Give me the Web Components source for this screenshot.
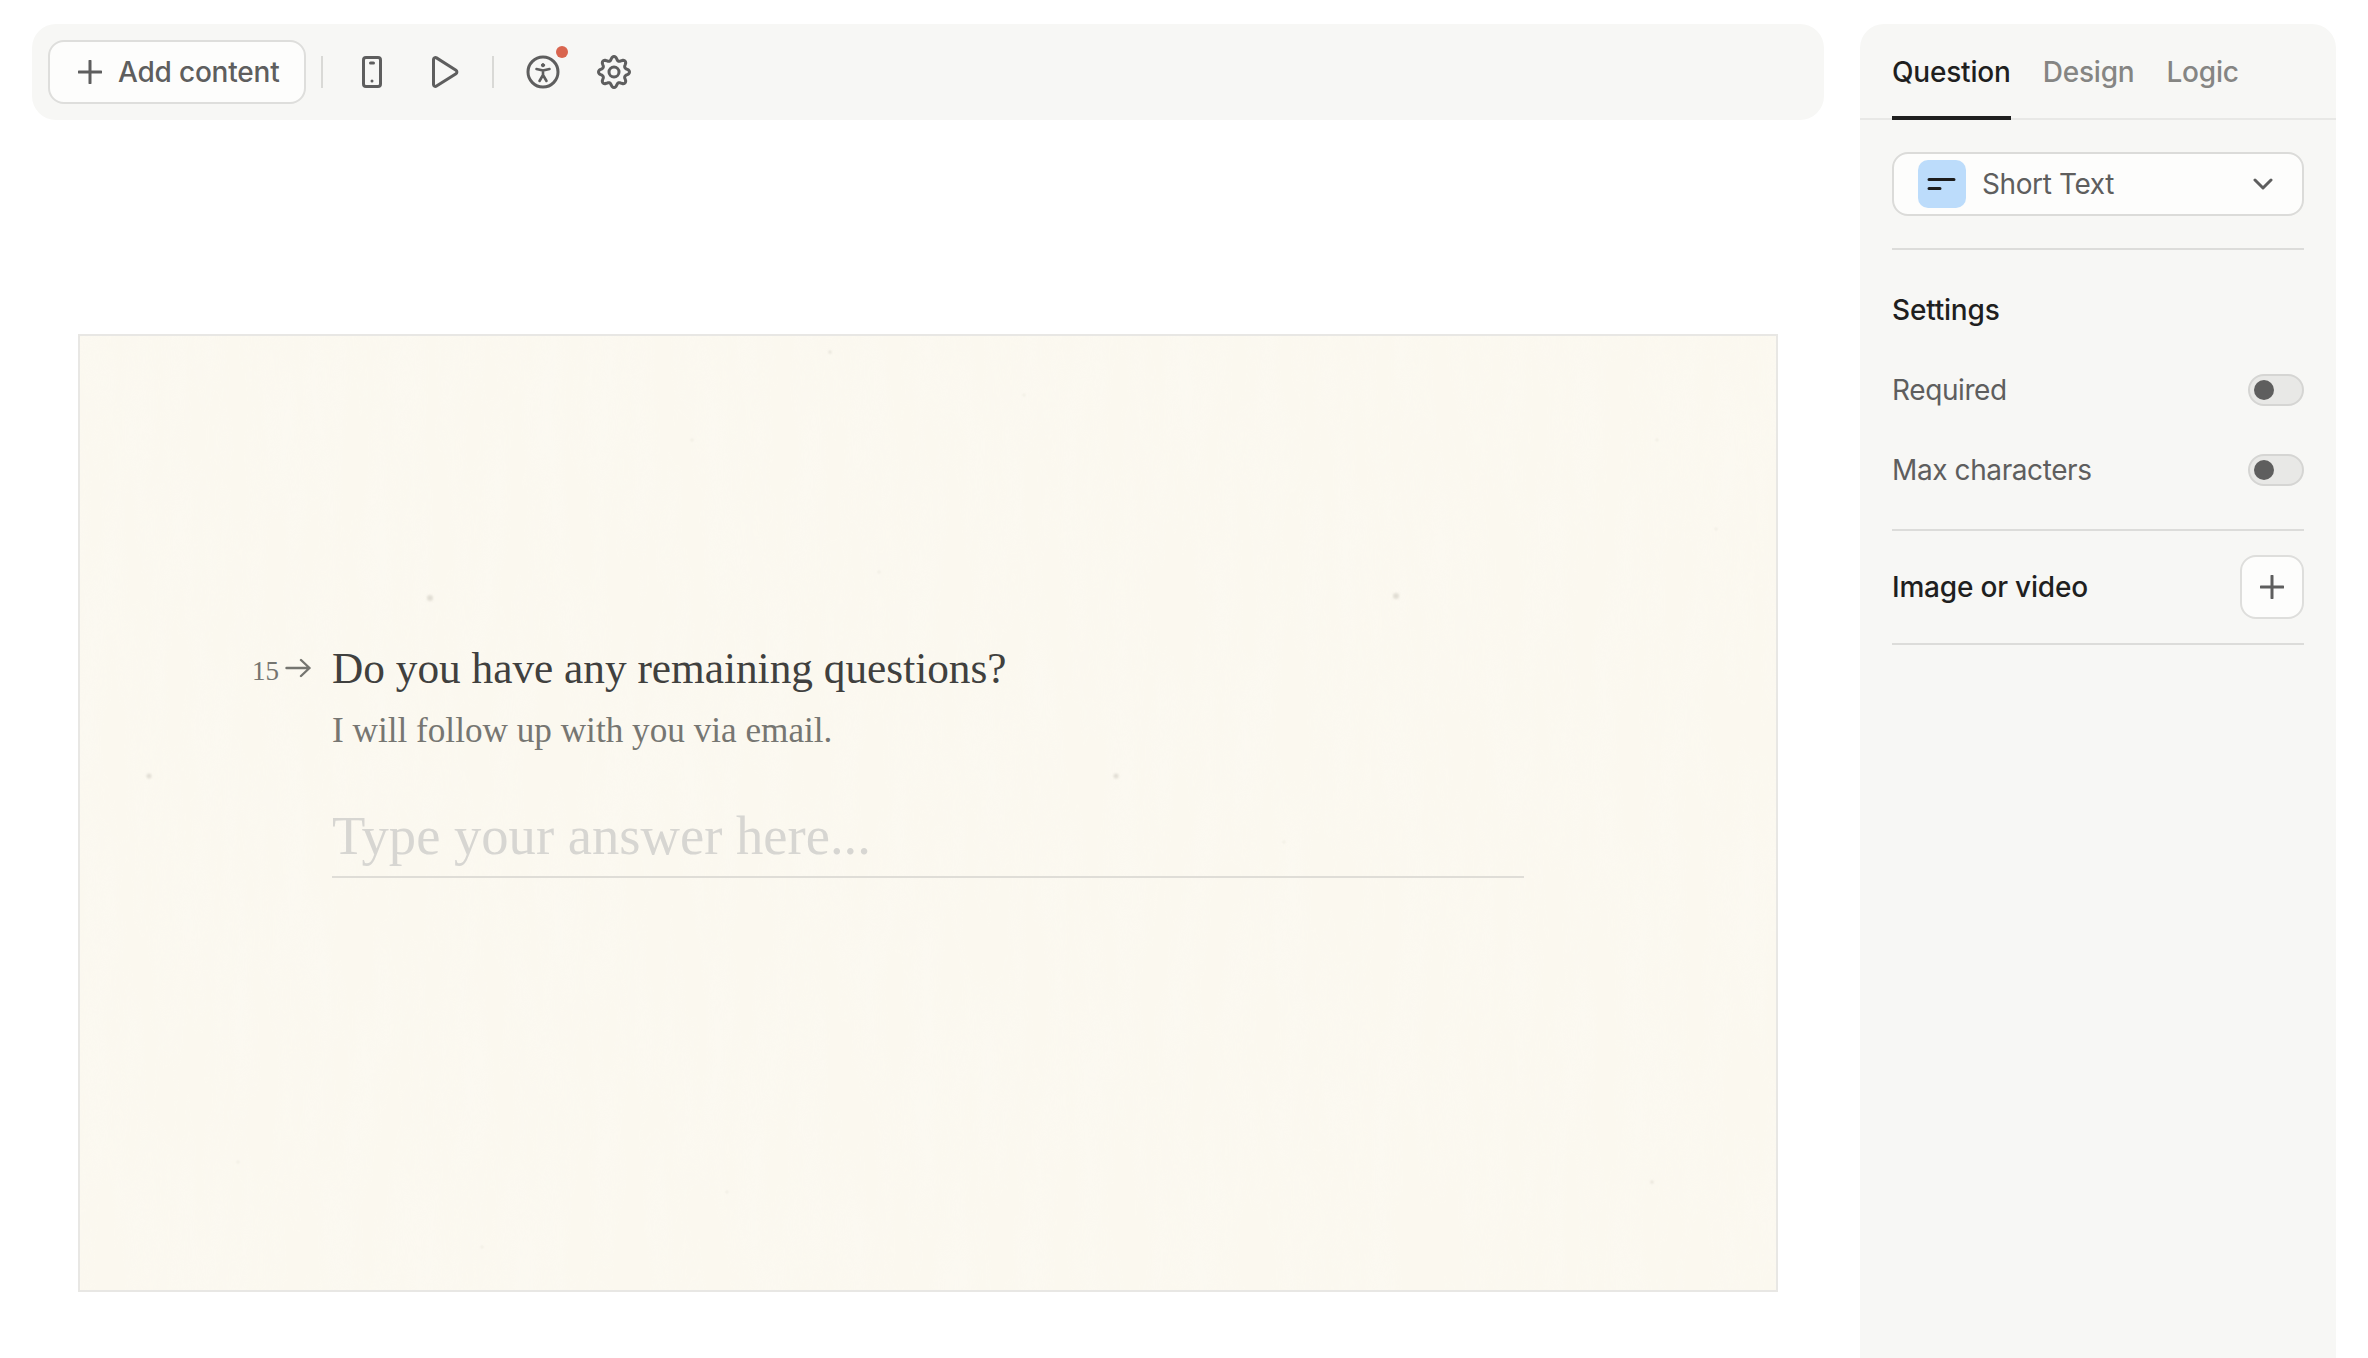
<!DOCTYPE html>
<html>
<head>
<meta charset="utf-8">
<title>Form editor</title>
<style>
  html, body { margin: 0; height: 100%; background: #fff; overflow: hidden; }
  body { font-family: Inter, "Liberation Sans", sans-serif; }
</style>
</head>
<body>
<editor-shell>
  <editor-toolbar slot="toolbar"></editor-toolbar>
  <form-canvas slot="canvas">
    <question-block number="15" title="Do you have any remaining questions?" description="I will follow up with you via email." placeholder="Type your answer here..."></question-block>
  </form-canvas>
  <side-panel slot="panel"></side-panel>
</editor-shell>

<script>
class EditorShell extends HTMLElement {
  constructor() {
    super();
    this.attachShadow({ mode: 'open' }).innerHTML = `
      <style>
        :host {
          display: grid;
          grid-template-columns: 1792px 476px;
          column-gap: 36px;
          height: 1358px;
          box-sizing: border-box;
          padding: 24px 32px 0;
        }
        .main { display: flex; flex-direction: column; }
        .canvas { padding: 214px 46px 0; }
      </style>
      <div class="main">
        <slot name="toolbar"></slot>
        <div class="canvas"><slot name="canvas"></slot></div>
      </div>
      <slot name="panel"></slot>
    `;
  }
}

class EditorToolbar extends HTMLElement {
  get gearPath() {
    // eight soft teeth round the centre
    let pts = [];
    for (let i = 0; i < 96; i++) {
      let a = i / 96 * Math.PI * 2;
      let r = 13.6 + 1.9 * Math.sign(Math.cos(8 * a)) * Math.pow(Math.abs(Math.cos(8 * a)), 0.7);
      pts.push((16 + r * Math.sin(a)).toFixed(2) + ' ' + (16 - r * Math.cos(a)).toFixed(2));
    }
    return 'M' + pts.join('L') + 'Z';
  }

  constructor() {
    super();
    this.attachShadow({ mode: 'open' }).innerHTML = `
      <style>
        :host {
          display: flex;
          align-items: center;
          height: 96px;
          box-sizing: border-box;
          padding: 0 16px;
          background: #f7f7f5;
          border-radius: 24px;
        }
        button {
          display: flex;
          align-items: center;
          gap: 16px;
          width: 258px;
          height: 64px;
          box-sizing: border-box;
          padding: 0 0 0 28px;
          background: #fdfdfc;
          border: 2px solid #dededc;
          border-radius: 16px;
          font: 450 28px Inter, sans-serif;
          letter-spacing: -0.2px;
          color: #5e5e5e;
        }
        .sep { width: 2px; height: 32px; background: #d9d9d6; }
        .icon { display: flex; align-items: center; justify-content: center; position: relative; }
        svg { display: block; fill: none; stroke: #5e5e5e; stroke-width: 3; stroke-linecap: round; stroke-linejoin: round; }
        .dot {
          position: absolute;
          left: 30px;
          top: -9px;
          width: 12px;
          height: 12px;
          border-radius: 50%;
          background: #d9654f;
        }
      </style>
      <button>
        <svg width="24" height="24" viewBox="0 0 24 24"><path d="M12 1v22M1 12h22"/></svg>
        Add content
      </button>
      <div class="sep" style="margin-left:15px"></div>
      <div class="icon" style="margin-left:37px">
        <svg width="24" height="34" viewBox="0 0 24 34"><rect x="3.5" y="2.5" width="17" height="29" rx="2.5"/><path d="M10.5 8h3" /><path d="M12 26h.01"/></svg>
      </div>
      <div class="icon" style="margin-left:46px">
        <svg width="30" height="34" viewBox="0 0 30 34"><path d="M3.5 4.6c0-1.6 1.7-2.5 3-1.7l19.5 12.4c1.2.8 1.2 2.6 0 3.4L6.5 31.1c-1.3.8-3-.1-3-1.7z"/></svg>
      </div>
      <div class="sep" style="margin-left:32px"></div>
      <div class="icon" style="margin-left:32px">
        <svg width="34" height="34" viewBox="0 0 34 34"><circle cx="17" cy="17" r="15"/><circle cx="17" cy="10.2" r="1.6" fill="#5e5e5e" stroke-width="1"/><path d="M10.5 14l6.5 1.6 6.5-1.6M17 15.6v4.4M17 20l-3.5 6M17 20l3.5 6" stroke-width="2.6"/></svg>
        <span class="dot"></span>
      </div>
      <div class="icon" style="margin-left:38px">
        <svg width="32" height="32" viewBox="0 0 32 32" style="overflow:visible"><path d="${this.gearPath}"/><circle cx="16" cy="16" r="5"/></svg>
      </div>
    `;
  }
}

class FormCanvas extends HTMLElement {
  constructor() {
    super();
    let specks = [[428,596,3],[1394,594,3],[147,774,2.5],[1114,774,2.5],[828,350,1.5],[1022,393,1],[690,438,1],[1655,438,1],[1714,527,1],[877,570,1],[236,1160,1],[725,1190,1],[1650,1180,1.5],[1282,840,1],[480,1245,1]]
      .map(s => `<circle cx="${s[0] - 78}" cy="${s[1] - 334}" r="${s[2]}"/>`).join('');
    this.attachShadow({ mode: 'open' }).innerHTML = `
      <style>
        :host {
          display: block;
          position: relative;
          width: 1700px;
          height: 958px;
          box-sizing: border-box;
          border: 2px solid #e8e7e4;
          background: #fbf8ef;
          overflow: hidden;
        }
        svg.paper { position: absolute; inset: 0; width: 100%; height: 100%; }
        .content { position: relative; padding: 308px 0 0 176px; }
      </style>
      <svg class="paper" aria-hidden="true">
        <filter id="grain" x="0" y="0" width="100%" height="100%">
          <feTurbulence type="fractalNoise" baseFrequency="0.035 0.006" numOctaves="3" seed="7"/>
          <feColorMatrix values="0 0 0 0 1  0 0 0 0 1  0 0 0 0 1  0.9 0 0 0 -0.3"/>
        </filter>
        <filter id="soft"><feGaussianBlur stdDeviation="1"/></filter>
        <rect width="100%" height="100%" filter="url(#grain)" opacity="0.3"/>
        <g fill="#d6d2c8" opacity="0.7" filter="url(#soft)">${specks}</g>
      </svg>
      <div class="content"><slot></slot></div>
    `;
  }
}

class QuestionBlock extends HTMLElement {
  connectedCallback() {
    this.attachShadow({ mode: 'open' }).innerHTML = `
      <style>
        :host {
          display: grid;
          grid-template-columns: 76px 1192px;
          font-family: "Liberation Serif", serif;
        }
        .num {
          display: flex;
          align-items: center;
          justify-content: flex-end;
          gap: 6px;
          height: 48px;
          padding-right: 21px;
          font-size: 27px;
          color: #757570;
        }
        .num span { position: relative; top: 3px; flex: none; }
        svg { display: block; flex: none; fill: none; stroke: #757570; stroke-width: 2.4; stroke-linecap: round; stroke-linejoin: round; }
        h1 {
          margin: 0;
          height: 48px;
          font-size: 43.3px;
          font-weight: 400;
          line-height: 48px;
          color: #40403e;
        }
        p {
          margin: 0;
          padding-top: 20px;
          font-size: 35.2px;
          line-height: 38px;
          color: #767672;
        }
        .answer {
          margin-top: 56px;
          height: 70px;
          border-bottom: 2px solid #dfddd7;
          font-size: 54.6px;
          line-height: 60px;
          color: #d7d6d2;
        }
      </style>
      <div class="num">
        <span>${this.getAttribute('number')}</span>
        <svg width="26" height="20" viewBox="0 0 26 20"><path d="M1.5 10h23M16 2l8.5 8-8.5 8"/></svg>
      </div>
      <div>
        <h1>${this.getAttribute('title')}</h1>
        <p>${this.getAttribute('description')}</p>
        <div class="answer">${this.getAttribute('placeholder')}</div>
      </div>
    `;
  }
}

class ToggleRow extends HTMLElement {
  constructor() {
    super();
    this.attachShadow({ mode: 'open' }).innerHTML = `
      <style>
        :host {
          display: flex;
          align-items: center;
          justify-content: space-between;
          height: 80px;
          font: 400 28px Inter, sans-serif;
          letter-spacing: -0.4px;
          color: #5e5e5e;
        }
        .track {
          display: flex;
          align-items: center;
          width: 56px;
          height: 32px;
          box-sizing: border-box;
          padding-left: 4px;
          background: #e8e8e6;
          border: 2px solid #d5d5d3;
          border-radius: 16px;
        }
        .knob { width: 20px; height: 20px; border-radius: 50%; background: #5e5e5e; }
      </style>
      <slot></slot>
      <div class="track"><div class="knob"></div></div>
    `;
  }
}

class TypeSelect extends HTMLElement {
  constructor() {
    super();
    this.attachShadow({ mode: 'open' }).innerHTML = `
      <style>
        :host {
          display: flex;
          align-items: center;
          height: 64px;
          box-sizing: border-box;
          padding: 0 29px 0 24px;
          background: #fdfdfc;
          border: 2px solid #dbdbd9;
          border-radius: 16px;
          font: 400 28px Inter, sans-serif;
          letter-spacing: -0.4px;
          color: #5e5e5e;
        }
        .tile {
          display: flex;
          align-items: center;
          justify-content: center;
          width: 48px;
          height: 48px;
          margin-right: 16px;
          background: #bcdcfb;
          border-radius: 10px;
        }
        .label { flex: 1; }
        svg { display: block; fill: none; stroke-linecap: round; stroke-linejoin: round; }
      </style>
      <div class="tile">
        <svg width="30" height="14" viewBox="0 0 30 14" stroke="#1d1d1d" stroke-width="3"><path d="M2 2.5h25M2 11.5h11"/></svg>
      </div>
      <span class="label"><slot></slot></span>
      <svg width="20" height="12" viewBox="0 0 20 12" stroke="#5e5e5e" stroke-width="3"><path d="M2 2l8 8 8-8"/></svg>
    `;
  }
}

class SidePanel extends HTMLElement {
  constructor() {
    super();
    this.attachShadow({ mode: 'open' }).innerHTML = `
      <style>
        :host {
          display: block;
          box-sizing: border-box;
          background: #f7f7f5;
          border-radius: 24px 24px 0 0;
          font: 400 28px Inter, sans-serif;
        }
        nav {
          display: flex;
          gap: 32px;
          height: 96px;
          box-sizing: border-box;
          padding: 0 32px;
          border-bottom: 2px solid #e8e8e6;
        }
        nav a {
          height: 96px;
          box-sizing: border-box;
          padding-top: 30px;
          line-height: 36px;
          font-weight: 450;
          letter-spacing: -0.2px;
          color: #858583;
        }
        nav a.on { color: #1f1f1f; border-bottom: 4px solid #1f1f1f; }
        .body { padding: 32px 32px 0; }
        .rule { height: 2px; background: #dcdcda; }
        h2 {
          margin: 0;
          font-size: 28px;
          font-weight: 450;
          line-height: 36px;
          letter-spacing: -0.2px;
          color: #1f1f1f;
        }
        .settings { padding: 42px 0 19px; }
        .settings h2 { margin-bottom: 22px; }
        .media {
          display: flex;
          align-items: center;
          justify-content: space-between;
          height: 112px;
        }
        .add {
          display: flex;
          align-items: center;
          justify-content: center;
          width: 64px;
          height: 64px;
          box-sizing: border-box;
          background: #fdfdfc;
          border: 2px solid #dededc;
          border-radius: 16px;
        }
        svg { display: block; fill: none; stroke: #5e5e5e; stroke-width: 3; stroke-linecap: round; }
      </style>
      <nav>
        <a class="on">Question</a>
        <a>Design</a>
        <a>Logic</a>
      </nav>
      <div class="body">
        <type-select>Short Text</type-select>
        <div class="rule" style="margin-top:32px"></div>
        <div class="settings">
          <h2>Settings</h2>
          <toggle-row>Required</toggle-row>
          <toggle-row>Max characters</toggle-row>
        </div>
        <div class="rule"></div>
        <div class="media">
          <h2>Image or video</h2>
          <div class="add"><svg width="24" height="24" viewBox="0 0 24 24"><path d="M12 1v22M1 12h22"/></svg></div>
        </div>
        <div class="rule"></div>
      </div>
    `;
  }
}

customElements.define('editor-shell', EditorShell);
customElements.define('editor-toolbar', EditorToolbar);
customElements.define('form-canvas', FormCanvas);
customElements.define('question-block', QuestionBlock);
customElements.define('toggle-row', ToggleRow);
customElements.define('type-select', TypeSelect);
customElements.define('side-panel', SidePanel);
</script>
</body>
</html>
